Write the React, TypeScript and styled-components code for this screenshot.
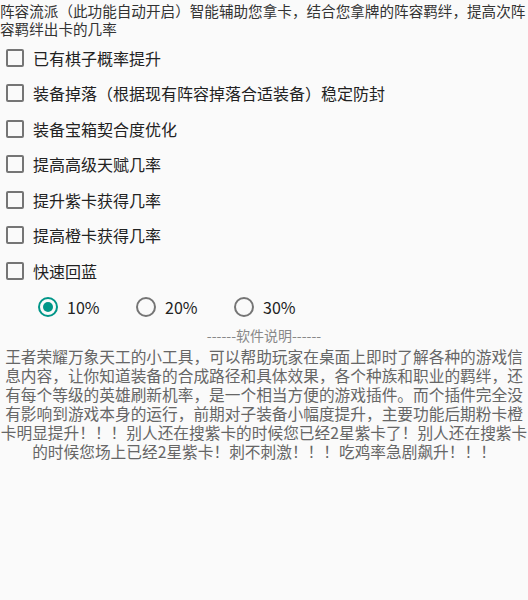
import React, { useState } from "react";
import styled, { createGlobalStyle } from "styled-components";

const GlobalStyle = createGlobalStyle`
  html, body {
    margin: 0;
    padding: 0;
    background: #fafafa;
  }
  body {
    font-family: "Noto Sans CJK SC", "Noto Sans", sans-serif;
  }
`;

const Page = styled.div`
  width: 528px;
  min-height: 600px;
  background: #fafafa;
  display: flex;
  flex-direction: column;
`;

const Intro = styled.div`
  font-size: 14.6px;
  line-height: 18px;
  color: #333;
  padding-top: 2px;
  margin-bottom: 2px;
`;

const IntroLine = styled.span`
  display: block;
  white-space: nowrap;
`;

const OptionRow = styled.label`
  height: 35.5px;
  display: flex;
  align-items: center;
  padding-left: 6px;
  gap: 9px;
  cursor: pointer;
`;

const Box = styled.span<{ $checked: boolean }>`
  width: 18px;
  height: 18px;
  box-sizing: border-box;
  border: 2px solid ${(p) => (p.$checked ? "#009688" : "#757575")};
  background: ${(p) => (p.$checked ? "#009688" : "transparent")};
  border-radius: 2px;
  flex-shrink: 0;
`;

const Label = styled.span`
  font-size: 16px;
  color: #222;
  line-height: 20px;
`;

const RadioRow = styled.div`
  height: 36px;
  display: flex;
  align-items: center;
  padding-left: 38px;
`;

const RadioItem = styled.label`
  width: 98px;
  display: flex;
  align-items: center;
  gap: 9px;
  cursor: pointer;
`;

const Circle = styled.span<{ $checked: boolean }>`
  width: 20px;
  height: 20px;
  box-sizing: border-box;
  border-radius: 50%;
  border: 2px solid ${(p) => (p.$checked ? "#009688" : "#757575")};
  display: flex;
  align-items: center;
  justify-content: center;
  flex-shrink: 0;

  &::after {
    content: "";
    width: 10px;
    height: 10px;
    border-radius: 50%;
    background: #009688;
    display: ${(p) => (p.$checked ? "block" : "none")};
  }
`;

const RadioText = styled.span`
  font-size: 16px;
  color: #222;
  line-height: 20px;
`;

const SectionTitle = styled.div`
  text-align: center;
  font-size: 14px;
  line-height: 16px;
  color: #888;
  margin-top: 2px;
`;

const Description = styled.div`
  text-align: center;
  font-size: 15.7px;
  line-height: 19px;
  color: #666;
  margin-top: 4px;
`;

const options = [
  "已有棋子概率提升",
  "装备掉落（根据现有阵容掉落合适装备）稳定防封",
  "装备宝箱契合度优化",
  "提高高级天赋几率",
  "提升紫卡获得几率",
  "提高橙卡获得几率",
  "快速回蓝",
];

const rates = ["10%", "20%", "30%"];

export default function App() {
  const [checked, setChecked] = useState<boolean[]>(options.map(() => false));
  const [rate, setRate] = useState(0);

  const toggle = (i: number) =>
    setChecked((prev) => prev.map((v, j) => (j === i ? !v : v)));

  return (
    <Page>
      <GlobalStyle />
      <Intro>
        <IntroLine>
          阵容流派（此功能自动开启）智能辅助您拿卡，结合您拿牌的阵容羁绊，提高次阵
        </IntroLine>
        <IntroLine>容羁绊出卡的几率</IntroLine>
      </Intro>
      {options.map((text, i) => (
        <OptionRow key={text} onClick={() => toggle(i)}>
          <Box $checked={checked[i]} />
          <Label>{text}</Label>
        </OptionRow>
      ))}
      <RadioRow>
        {rates.map((r, i) => (
          <RadioItem key={r} onClick={() => setRate(i)}>
            <Circle $checked={rate === i} />
            <RadioText>{r}</RadioText>
          </RadioItem>
        ))}
      </RadioRow>
      <SectionTitle>------软件说明------</SectionTitle>
      <Description>
        王者荣耀万象天工的小工具，可以帮助玩家在桌面上即时了解各种的游戏信息内容，让你知道装备的合成路径和具体效果，各个种族和职业的羁绊，还有每个等级的英雄刷新机率，是一个相当方便的游戏插件。而个插件完全没有影响到游戏本身的运行，前期对子装备小幅度提升，主要功能后期粉卡橙卡明显提升！！！别人还在搜紫卡的时候您已经2星紫卡了！别人还在搜紫卡的时候您场上已经2星紫卡！刺不刺激！！！吃鸡率急剧飙升！！！
      </Description>
    </Page>
  );
}
